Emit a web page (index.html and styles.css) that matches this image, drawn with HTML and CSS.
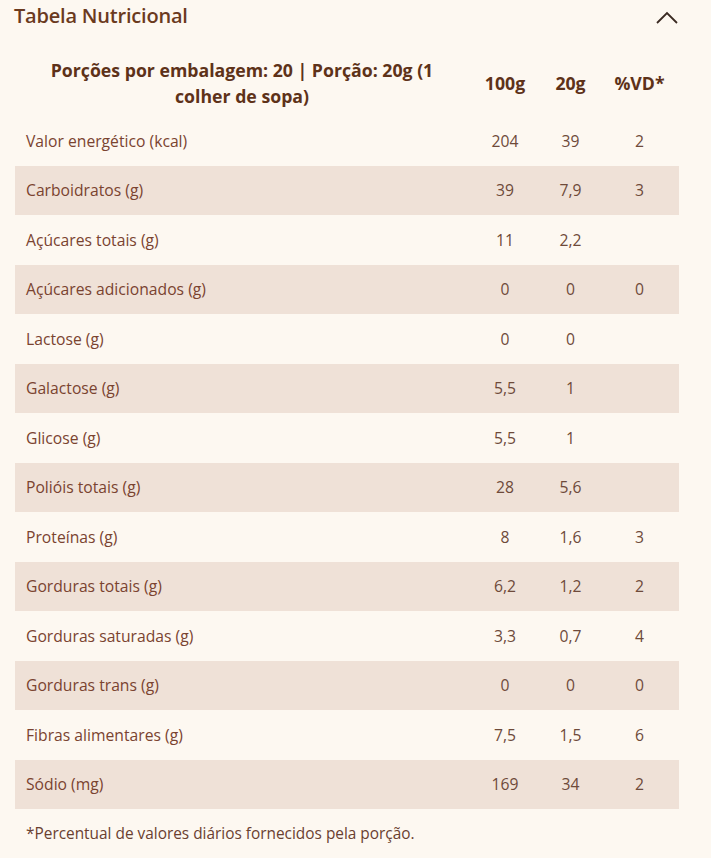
FILE: index.html
```html
<!DOCTYPE html>
<html lang="pt-BR">
<head>
<meta charset="utf-8">
<title>Tabela Nutricional</title>
<link rel="stylesheet" href="styles.css">
</head>
<body>
<section class="panel">
  <div class="panel-head">
    <h2 class="panel-title">Tabela Nutricional</h2>
    <svg class="chevron" width="24" height="14" viewBox="0 0 24 14" aria-hidden="true">
      <path d="M2 12 L12 2 L22 12" fill="none" stroke="#3a2a22" stroke-width="1.8"/>
    </svg>
  </div>
  <table class="nutri">
    <thead>
      <tr>
        <th class="th-main">Porções por embalagem: 20 | Porção: 20g (1 colher de sopa)</th>
        <th class="c2">100g</th>
        <th class="c3">20g</th>
        <th class="c4">%VD*</th>
      </tr>
    </thead>
    <tbody>
      <tr><td>Valor energético (kcal)</td><td>204</td><td>39</td><td>2</td></tr>
      <tr><td>Carboidratos (g)</td><td>39</td><td>7,9</td><td>3</td></tr>
      <tr><td>Açúcares totais (g)</td><td>11</td><td>2,2</td><td></td></tr>
      <tr><td>Açúcares adicionados (g)</td><td>0</td><td>0</td><td>0</td></tr>
      <tr><td>Lactose (g)</td><td>0</td><td>0</td><td></td></tr>
      <tr><td>Galactose (g)</td><td>5,5</td><td>1</td><td></td></tr>
      <tr><td>Glicose (g)</td><td>5,5</td><td>1</td><td></td></tr>
      <tr><td>Polióis totais (g)</td><td>28</td><td>5,6</td><td></td></tr>
      <tr><td>Proteínas (g)</td><td>8</td><td>1,6</td><td>3</td></tr>
      <tr><td>Gorduras totais (g)</td><td>6,2</td><td>1,2</td><td>2</td></tr>
      <tr><td>Gorduras saturadas (g)</td><td>3,3</td><td>0,7</td><td>4</td></tr>
      <tr><td>Gorduras trans (g)</td><td>0</td><td>0</td><td>0</td></tr>
      <tr><td>Fibras alimentares (g)</td><td>7,5</td><td>1,5</td><td>6</td></tr>
      <tr><td>Sódio (mg)</td><td>169</td><td>34</td><td>2</td></tr>
    </tbody>
  </table>
  <p class="note">*Percentual de valores diários fornecidos pela porção.</p>
</section>
</body>
</html>
```

FILE: styles.css
```css
html, body {
  margin: 0;
  padding: 0;
  background: #fdf8f1;
}
body {
  font-family: "Open Sans", "Noto Sans", sans-serif;
  color: #6e4532;
}
.panel {
  width: 664px;
  padding-left: 15px;
}
.panel-head {
  display: flex;
  justify-content: space-between;
  align-items: center;
  height: 32px;
}
.panel-title {
  margin: 0 0 0 -1px;
  font-size: 20px;
  font-weight: 600;
  color: #6b3a1e;
  letter-spacing: -0.2px;
  line-height: 32px;
}
.chevron {
  margin-right: 0;
  margin-top: 4px;
}
.nutri {
  width: 664px;
  border-collapse: collapse;
  margin-top: 19px;
  font-size: 15.7px;
}
.nutri th {
  font-weight: 700;
  font-size: 17.7px;
  color: #5e3219;
  line-height: 26px;
  padding: 6px 0 7px;
  text-align: center;
}
.th-main {
  padding-left: 20px !important;
  padding-right: 20px !important;
}
.c2 { width: 72px; }
.c3 { width: 59px; }
.c4 { width: 79px; }
.nutri td {
  line-height: 22.5px;
  padding: 13.5px 0;
  text-align: center;
  color: #6e4a3a;
}
.nutri td:first-child {
  text-align: left;
  padding-left: 11px;
  color: #7a4330;
}
.nutri tbody tr:nth-child(even) {
  background: #efe1d7;
}
.note {
  margin: 14px 0 0 11px;
  font-size: 15.4px;
  color: #6a4030;
}
```
